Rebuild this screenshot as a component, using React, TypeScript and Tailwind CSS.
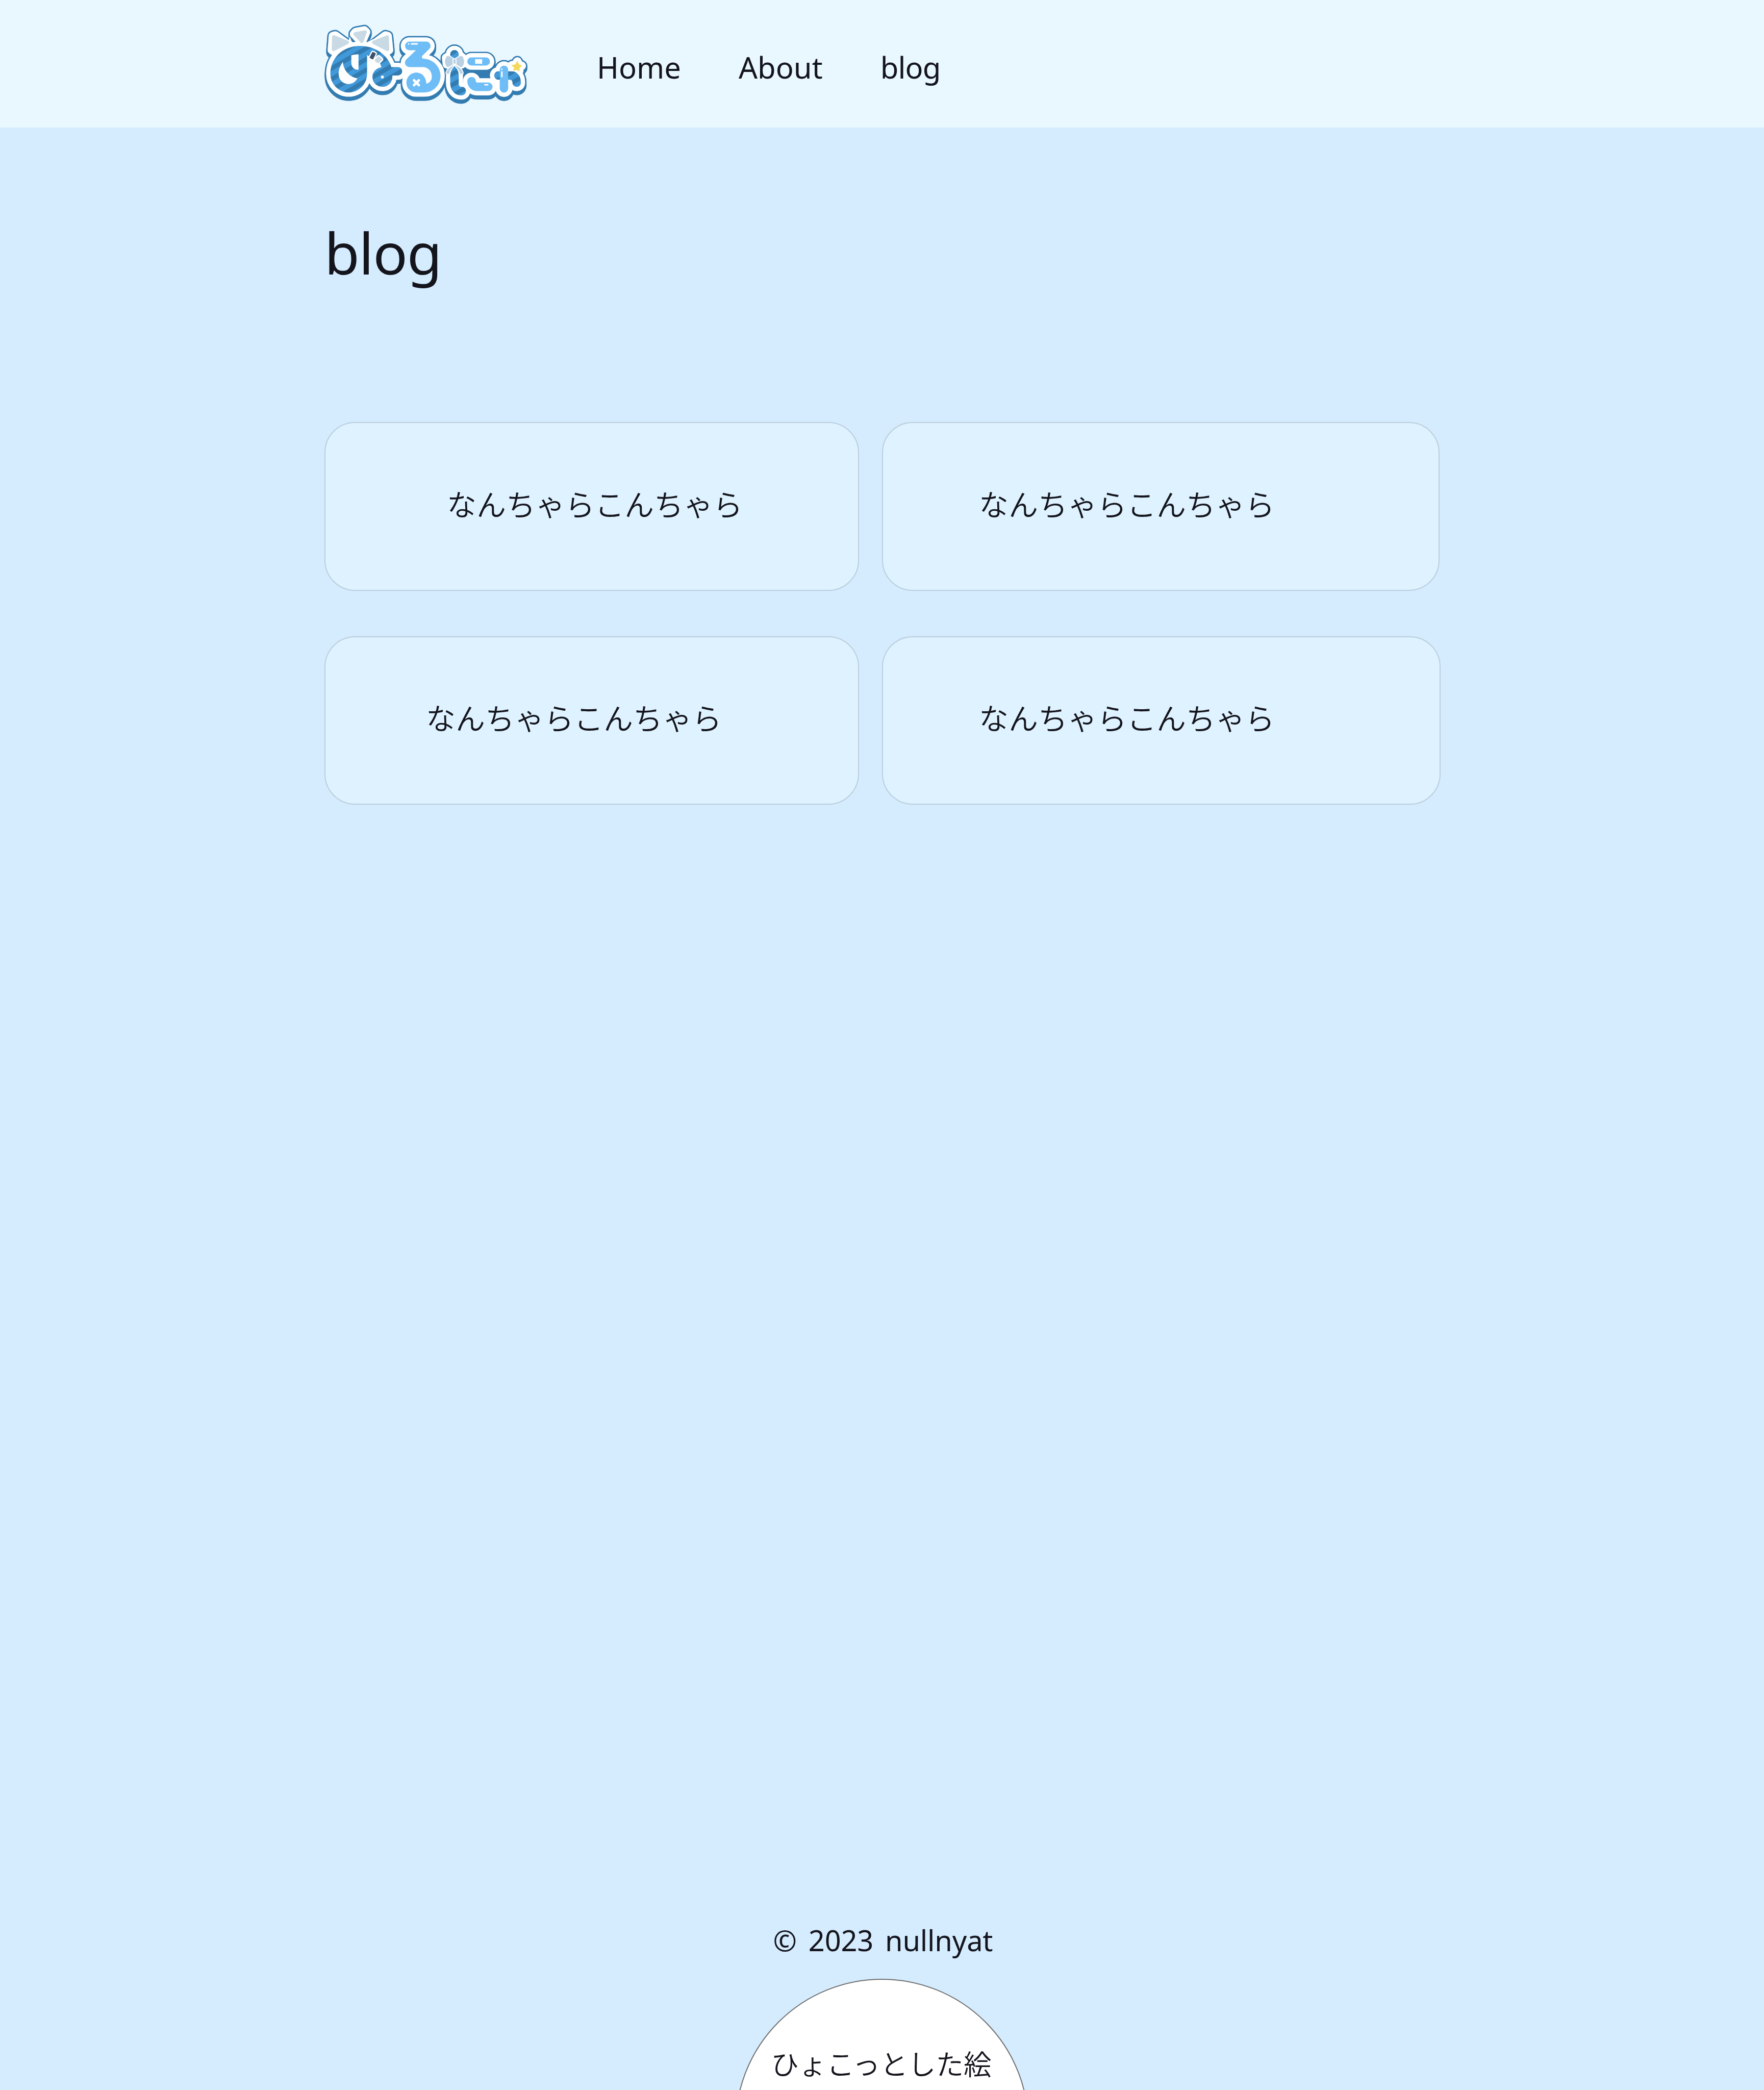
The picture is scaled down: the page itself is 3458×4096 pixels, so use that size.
import React from "react";

const lettersBase =
  "M86 363C86 260 165 180 280 180C385 180 465 245 484 318L528 318A27.5 27.5 0 0 1 528 373L491 373C495 415 465 447 427 447C390 447 361 420 361 383C361 350 385 325 420 319L410 292L345 250L326 240L326 363A120 121 0 0 1 86 363Z";
const ru =
  "M602 152L712 152A28 28 0 0 1 732 200L686 246Q680 258 692 263C755 263 806 315 806 375C806 435 760 484 700 484L648 484C610 484 583 455 583 420C583 383 612 354 648 354C685 354 713 385 713 427C735 422 749 405 749 380C749 345 725 318 690 318L603 318C575 318 564 285 584 267L645 208L602 208A28 28 0 0 1 602 152Z";
const niLeft =
  "M897 308C875 335 869 355 869 385L869 420C869 470 900 503 940 503C960 503 972 490 972 474C972 458 960 447 944 447C930 447 925 440 925 425L925 370C925 345 912 325 897 308Z";
const niBottom =
  "M981 410C981 393 993 383 1009 383C1025 383 1036 395 1036 408Q1036 419 1048 419L1118 419A28 28 0 0 1 1118 475L1045 475C1008 475 981 445 981 410Z";
const ya =
  "M1184 346L1270 346C1305 346 1331 375 1331 418C1331 436 1320 447 1304 447C1288 447 1276 436 1276 420C1276 408 1268 401 1256 401L1184 401A27.5 27.5 0 0 1 1184 346Z";
const star =
  "M1308 282L1317 302L1336 310L1320 323L1320 344L1303 334L1283 341L1288 321L1273 306L1295 303Z";
const earLeft = "M109 122L195 157L107 202Z";
const earMid = "M249 102L312 90L291 148Z";
const earRight = "M457 123L371 157L459 202Z";
const wingLeft = "M860 246L888 262L888 300L860 317Q847 321 842 308Q828 284 842 254Q848 242 860 246Z";
const wingRight = "M935 246L907 262L907 300L935 317Q948 321 953 308Q967 284 953 254Q947 242 935 246Z";
const tailLeft = "M868 320L894 307C878 325 866 340 860 364L843 360C845 345 855 330 868 320Z";
const tailRight = "M927 320L901 307C917 325 929 340 935 364L952 360C950 345 940 330 927 320Z";

function Logo() {
  return (
    <svg viewBox="48 30 1332 540" className="mt-[1px] h-[162px] w-[400px] shrink-0" role="img">
      <defs>
        <pattern id="stripes" width="60" height="61" patternUnits="userSpaceOnUse" patternTransform="translate(0 12) rotate(-30)">
          <rect width="60" height="61" fill="#4299d9" />
          <rect width="60" height="29" fill="#337cb1" />
        </pattern>
        <g id="silhouette" strokeLinejoin="round" strokeLinecap="round">
          <path d={lettersBase} />
          <path d={ru} />
          <path d={niLeft} />
          <circle cx="897" cy="235" r="28" />
          <path d={niBottom} />
          <rect x="981" y="255" width="148" height="53" rx="26.5" />
          <path d={ya} />
          <rect x="1193" y="309" width="55" height="176" rx="27.5" />
          <path d={star} />
          <path d="M118 112L103 116L96 206L104 212L197 170Z" />
          <path d="M241 102L252 90L308 79L319 90L291 155Z" />
          <path d="M446 112L460 116L469 206L461 212L369 170Z" />
          <path d="M843 258L857 249L940 249L950 258L945 300L848 300Z" />
        </g>
      </defs>

      <g fill="#337cb1" stroke="#337cb1" strokeWidth="74">
        <use href="#silhouette" />
        <use href="#silhouette" y="9" />
        <use href="#silhouette" y="18" />
      </g>
      <path d="M960 325H1150V400H1040L960 372Z" fill="#337cb1" />
      <g fill="#fff">
        <use href="#silhouette" stroke="#fff" strokeWidth="56" />
        <path d="M326 240L410 290L420 325L370 390L343 395L326 370Z" />
        <path d="M213 117L225 150L291 200L320 158L366 135L380 200L190 200Z" />
        <path d="M560 310H610V370H575Z" />
      </g>
      <path d="M329 155Q331 142 341 132L336 146Z" fill="#337cb1" />

      <g fill="#c9dae5" stroke="#c9dae5" strokeWidth="24" strokeLinejoin="round">
        <path d={earLeft} />
        <path d={earMid} />
        <path d={earRight} />
      </g>

      <path d={lettersBase} fill="url(#stripes)" />
      <g fill="#fff">
        <path d="M223 241Q245 236 270 234L270 336C240 336 223 318 223 290Z" />
        <path d="M168 284C170 340 215 385 263 392C250 415 230 429 205 429C165 429 140 400 140 362C140 335 150 308 168 284Z" />
        <circle cx="426" cy="383" r="9.5" />
      </g>
      <g stroke="#fff" strokeWidth="16" strokeLinejoin="round" paintOrder="stroke">
        <path d="M366 220L380 227Q384 230 382 234L367 264Q364 270 359 267L346 260Q341 257 344 252L359 223Q362 218 366 220Z" fill="#3b5064" />
        <path d="M405 249L421 262Q427 267 422 272L403 291Q398 296 393 291L378 279Q373 275 377 270L394 252Q400 245 405 249Z" fill="#c9dae5" />
      </g>

      <path d={ru} fill="#6ebdf7" />
      <g fill="#fff">
        <circle cx="597.5" cy="167" r="5" />
        <rect x="612" y="162" width="46" height="9.5" rx="4" />
      </g>
      <path d="M633 405L664 436M664 405L633 436" stroke="#fff" strokeWidth="17" strokeLinecap="round" />

      <circle cx="897" cy="235" r="28" fill="url(#stripes)" />
      <path d={niLeft} fill="url(#stripes)" />
      <g fill="#bad1e4" stroke="#fff" strokeWidth="11" strokeLinejoin="round" paintOrder="stroke">
        <path d={tailLeft} />
        <path d={tailRight} />
        <path d={wingLeft} />
        <path d={wingRight} />
        <rect x="890" y="267" width="15" height="29" rx="4" />
      </g>

      <rect x="981" y="255" width="148" height="53" rx="26.5" fill="#6ebdf7" />
      <rect x="1032" y="267" width="46" height="30" rx="3" fill="#fff" />
      <path d={niBottom} fill="#6ebdf7" />
      <rect x="1091" y="429" width="28" height="9" rx="4" fill="#fff" />

      <path d={ya} fill="url(#stripes)" />
      <rect x="1193" y="309" width="55" height="176" rx="27.5" fill="#6ebdf7" />
      <circle cx="1206.5" cy="332" r="5" fill="#fff" />
      <rect x="1202" y="345" width="9.5" height="40" rx="4" fill="#fff" />
      <path d={star} fill="#f2d95c" stroke="#f2d95c" strokeWidth="4" strokeLinejoin="round" />
    </svg>
  );
}

const posts = [
  { title: "なんちゃらこんちゃら", box: "w-[1048px] pl-[238px]" },
  { title: "なんちゃらこんちゃら", box: "w-[1093px] pl-[188px]" },
  { title: "なんちゃらこんちゃら", box: "w-[1048px] pl-[197px]" },
  { title: "なんちゃらこんちゃら", box: "w-[1095px] pl-[188px]" },
];

export default function App() {
  return (
    <div className="flex h-[4096px] w-[3458px] flex-col overflow-hidden bg-[#d5ecff] font-['Noto_Sans','Noto_Sans_CJK_JP',sans-serif] text-[#14141c]">
      <header className="flex h-[250px] shrink-0 items-center bg-[#e9f7ff] pl-[636px]">
        <Logo />
        <nav className="ml-[134px] flex gap-[113px] pt-[14px] text-[58px] leading-[80px]">
          <a>Home</a>
          <a>About</a>
          <a className="tracking-[-0.9px]">blog</a>
        </nav>
      </header>

      <main className="flex-1 pt-[170px] pl-[636px]">
        <h1 className="text-[112px] leading-[150px] tracking-[-1.3px]">blog</h1>
        <div className="mt-[257px] grid grid-cols-[1048px_1095px] gap-x-[45px] gap-y-[89px]">
          {posts.map((p, i) => (
            <article
              key={i}
              className={`flex h-[330.5px] items-center rounded-[60px] border-2 border-[#bbcedb] bg-[#def2ff] pb-[13px] ${p.box}`}
            >
              <p className="font-['Noto_Sans_CJK_JP',sans-serif] text-[58px] leading-[80px] font-[350] whitespace-nowrap">
                {p.title}
              </p>
            </article>
          ))}
        </div>
      </main>

      <footer className="flex h-[334px] shrink-0 flex-col items-center">
        <p className="pl-[4px] text-[56px] leading-[80px] tracking-[-0.2px] [word-spacing:8.5px]">© 2023 nullnyat</p>
        <div className="mt-[36px] flex h-[576px] w-[576px] shrink-0 justify-center rounded-full border-2 border-[#707070] bg-white pt-[123px]">
          <p className="-ml-[3px] font-['Noto_Sans_CJK_JP',sans-serif] text-[54.5px] leading-[80px] font-[350] whitespace-nowrap">
            ひょこっとした絵
          </p>
        </div>
      </footer>
    </div>
  );
}
